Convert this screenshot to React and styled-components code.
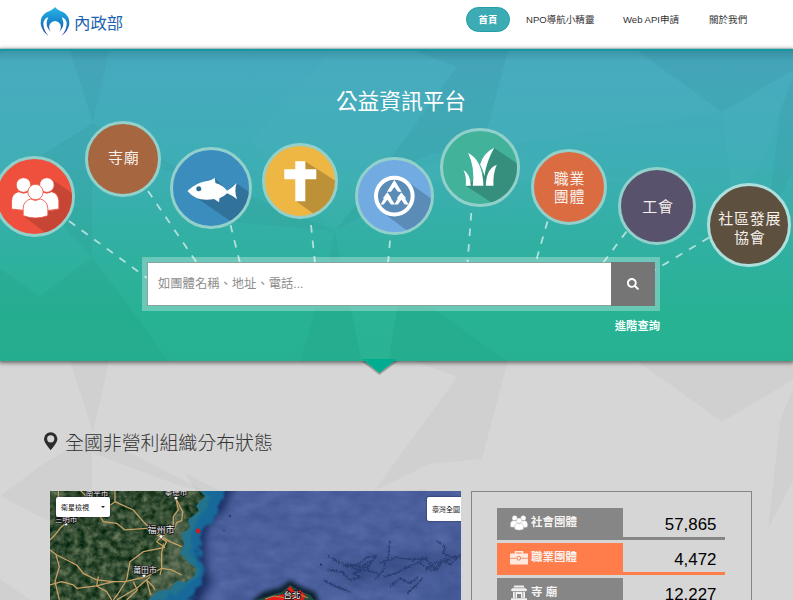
import React from "react";
import styled, { createGlobalStyle } from "styled-components";
import { FaSearch } from "react-icons/fa";

const GlobalStyle = createGlobalStyle`
  * { box-sizing: border-box; }
  body { margin: 0; background: #d6d6d6; }
`;

const Page = styled.div`
  width: 793px;
  height: 600px;
  overflow: hidden;
  display: flex;
  flex-direction: column;
  font-family: "Liberation Sans", "Noto Sans CJK TC", sans-serif;
  color: #222;
`;

const Header = styled.header`
  flex: none;
  height: 49px;
  display: flex;
  justify-content: space-between;
  align-items: flex-start;
  padding: 7px 46px 0 40px;
  background: #fff;
  border-bottom: 1px solid #d9eeee;
`;

const Brand = styled.a`
  display: flex;
  align-items: center;
  gap: 4px;
  height: 31px;
  color: #1c63b0;
  font-size: 16.4px;
  line-height: 30px;
`;

const Nav = styled.nav`
  display: flex;
  align-items: center;
  height: 25px;
`;

const HomeLink = styled.a`
  width: 44px;
  height: 25px;
  margin-right: 16px;
  border-radius: 13px;
  border: 1px solid #219fa6;
  background: #3cabb3;
  color: #fff;
  font-size: 9.4px;
  font-weight: 700;
  line-height: 23px;
  text-align: center;
`;

const NavLink = styled.a`
  width: ${(p) => p.$width}px;
  margin-left: ${(p) => p.$gap || 0}px;
  color: #333;
  font-size: 9.55px;
  line-height: 25px;
  white-space: nowrap;
`;

const Hero = styled.section`
  flex: none;
  position: relative;
  height: 312px;
  padding-top: 36px;
  display: flex;
  flex-direction: column;
  align-items: center;
  border-top: 2px solid #159aa3;
  background: linear-gradient(#3a94a6 0, #45a9bd 10px, #45abbd 30px, #3daeb4 38%, #31b0a2 62%, #27b294 85%, #26b292 100%);
  box-shadow: 0 1px 4px 1px rgba(0, 0, 0, 0.5);
`;

const Backdrop = styled.svg`
  position: absolute;
  top: 0;
  left: 0;
  width: 793px;
  height: 311px;
  pointer-events: none;
`;

const HeroTitle = styled.h1`
  position: relative;
  margin: 0;
  padding-left: 9px;
  height: 30px;
  color: #fff;
  font-size: 21.7px;
  font-weight: 400;
  line-height: 30px;
`;

const NodeCanvas = styled.div`
  position: absolute;
  inset: -2px 0 0 0;
`;

const Links = styled.svg`
  position: absolute;
  top: 0;
  left: 0;
  width: 793px;
  height: 312px;
`;

const Node = styled.a`
  position: absolute;
  left: ${(p) => p.$x - p.$r}px;
  top: ${(p) => p.$y - 49 - p.$r}px;
  width: ${(p) => p.$r * 2}px;
  height: ${(p) => p.$r * 2}px;
  display: flex;
  align-items: center;
  justify-content: center;
  overflow: hidden;
  border-radius: 50%;
  border: 3px solid ${(p) => p.$ring || "#92d0cb"};
  background: ${(p) => p.$color};
`;

const NodeIcon = styled.svg`
  display: block;
  flex: none;
  width: 100%;
  height: 100%;
`;

const NodeLabel = styled.span`
  padding: ${(p) => p.$drop || 0}px 0 0 2px;
  color: #f7f1ec;
  font-size: 15px;
  letter-spacing: 0.8px;
  line-height: 18.6px;
  text-align: center;
  white-space: pre;
`;

const SearchArea = styled.div`
  position: relative;
  width: 518px;
  margin: 140px 0 0 9px;
  display: flex;
  flex-direction: column;
  align-items: flex-end;
`;

const SearchBox = styled.form`
  width: 518px;
  height: 54px;
  display: flex;
  border: 5px solid rgba(255, 255, 255, 0.3);
  background-clip: padding-box;
`;

const SearchInput = styled.input`
  flex: 1;
  min-width: 0;
  height: 44px;
  padding: 0 10px;
  border: 1px solid #8aa49f;
  border-right: 0;
  border-radius: 0;
  background: #fff;
  font-family: inherit;
  font-size: 12.3px;
  outline: none;
  &::placeholder { color: #8d8d8d; opacity: 1; }
`;

const SearchButton = styled.button`
  width: 44px;
  height: 44px;
  padding: 0;
  border: 0;
  display: flex;
  align-items: center;
  justify-content: center;
  background: #757575;
  color: #fff;
  font-size: 12px;
`;

const AdvancedLink = styled.a`
  margin-top: 6px;
  color: #f4fffb;
  font-size: 11.3px;
  font-weight: 700;
  line-height: 18px;
`;

const Arrow = styled.svg`
  position: absolute;
  left: 357px;
  top: 307px;
  width: 45px;
  height: 22px;
`;

const Main = styled.main`
  flex: 1;
  position: relative;
  padding: 66px 41px 0 43px;
  background: #d6d6d6;
  z-index: 0;
`;

const MainBackdrop = styled(Backdrop)`
  z-index: -1;
`;

const HeroLayer = styled.div`
  position: relative;
  z-index: 1;
`;

const SectionTitle = styled.h2`
  margin: 0 0 46px;
  height: 18px;
  padding-top: 5px;
  display: flex;
  align-items: flex-start;
  gap: 7px;
  color: #333;
  font-size: 18.9px;
  font-weight: 300;
  line-height: 23px;
  white-space: nowrap;
`;

const PinIcon = styled.svg`
  flex: none;
  width: 15px;
  height: 20px;
`;

const Columns = styled.div`
  display: flex;
  gap: 10px;
  padding-left: 7px;
`;

const MapPanel = styled.div`
  position: relative;
  width: 411px;
  height: 109px;
  overflow: hidden;
`;

const MapDrawing = styled.svg`
  display: block;
  width: 411px;
  height: 109px;
  & filter { color-interpolation-filters: sRGB; }
`;

const MapControl = styled.button`
  position: absolute;
  top: 6px;
  left: ${(p) => p.$left}px;
  width: ${(p) => p.$width}px;
  height: ${(p) => p.$height}px;
  padding: 0 5px;
  display: flex;
  align-items: center;
  justify-content: space-between;
  border: 0;
  border-radius: 2px;
  background: #fff;
  box-shadow: 0 0 2px rgba(0, 0, 40, 0.7);
  color: #111;
  font-family: inherit;
  font-size: 7px;
  white-space: nowrap;
`;

const Caret = styled.i`
  border: 2px solid transparent;
  border-top-color: #222;
  border-bottom: 0;
`;

const StatsPanel = styled.aside`
  width: 281px;
  height: 140px;
  padding: 16px 25px 0;
  display: flex;
  flex-direction: column;
  gap: 3px;
  border: 1px solid #858585;
`;

const StatRow = styled.div`
  --tone: ${(p) => (p.$active ? "#ff7d4a" : "#868686")};
  width: 228px;
  height: 32px;
  flex: none;
  display: flex;
`;

const StatLabel = styled.div`
  width: 126px;
  padding: 0 0 5px 13px;
  display: flex;
  align-items: center;
  gap: 3px;
  background: var(--tone);
  color: #f6f3f2;
  font-size: 11.5px;
  font-weight: 700;
  line-height: 16px;
`;

const StatIcon = styled.svg`
  width: 18px;
  height: 16px;
  margin-top: 2px;
  overflow: visible;
`;

const StatValue = styled.div`
  flex: 1;
  padding-right: 8.5px;
  border-bottom: 3px solid var(--tone);
  color: #000;
  font-size: 16.9px;
  line-height: 33px;
  text-align: right;
`;

const facets = [
  ["d", "70,0 109,0 93,72"],
  ["d", "93,72 40,105 0,135 50,161 92,206 92,100"],
  ["d", "93,72 101,77 207,131 180,125 92,92"],
  ["l", "0,0 70,0 93,72 0,132"],
  ["d", "92,206 98,312 170,312 125,250"],
  ["d", "0,218 40,245 0,261"],
  ["d", "0,261 40,245 92,206 98,312 0,312"],
  ["d", "415,0 457,16 374,130 430,103 482,98 508,0"],
  ["l", "457,16 374,130 335,180 250,90 330,0 415,0"],
  ["d", "335,180 430,128 374,130"],
  ["d", "335,180 250,145 185,112 220,170"],
  ["d", "335,180 328,213 300,312 362,312 347,240"],
  ["l", "347,240 400,240 388,312 362,312"],
  ["d", "400,240 388,312 510,312 425,252"],
  ["d", "637,0 722,61 727,0"],
  ["d", "727,0 722,61 793,19 793,0"],
  ["l", "482,98 600,80 722,61 640,0 508,0"],
  ["l", "722,61 793,19 768,100 733,155"],
  ["d", "793,27 780,60 768,168 793,120"],
  ["l", "482,98 374,130 632,130"],
];

function Facets({ strength = 1 }) {
  return facets.map(([tone, points]) => (
    <polygon
      key={points}
      points={points}
      fill={tone === "d" ? "#000" : "#fff"}
      opacity={(tone === "d" ? 0.024 : 0.013) * strength}
    />
  ));
}

function PeopleShapes({ outline }) {
  return (
    <g fill="#fff" stroke={outline} strokeWidth="2.5">
      <circle cx="69" cy="225" r="22" />
      <circle cx="139" cy="225" r="22" />
      <path d="M33 297V272Q34 250 55 245Q69 254 84 245Q103 250 104 272V297Q70 305 33 297Z" />
      <path d="M105 297V272Q106 250 124 245Q139 254 153 245Q173 250 175 272V297Q140 306 105 297Z" />
      <circle cx="105" cy="246" r="23" />
      <path d="M68 317V294Q69 273 90 267Q105 276 120 267Q140 273 142 294V317Q105 331 68 317Z" />
    </g>
  );
}

const links = [
  [69, 221, 147, 278],
  [148, 191, 197, 263],
  [230.5, 225, 240, 263],
  [311, 225, 315, 263],
  [390, 240.5, 388, 263],
  [471.3, 213, 467.5, 263],
  [547.5, 221.5, 535.5, 263],
  [626.5, 231.5, 603, 263],
  [709, 237.5, 655, 270],
];

/* Icons are drawn on a grid three units per pixel. */
const nodes = [
  {
    x: 34, y: 196.5, r: 40.5, color: "#ee503d", origin: [0, 110],
    icon: (
      <>
        <path d="M154 208L290 300L230 440L68 318L140 300Z" fill="#c64535" />
        <PeopleShapes outline="#ee503d" />
      </>
    ),
  },
  { x: 122.8, y: 158.7, r: 38, color: "#a6663f", label: "寺廟" },
  {
    x: 211.2, y: 188, r: 41.3, color: "#3b8dbd", origin: [0, 110],
    icon: (
      <>
        <path d="M644 203L681 241L709 219L800 280L740 370L690 331L580 256Z" fill="#31729a" />
        <path d="M562 242Q587 218 617 213Q635 210 644 202L646 218Q668 224 681 241Q696 233 710 218Q701 241 711 267Q694 254 681 249Q672 259 658 264L657 276L642 266Q590 276 562 242Z" fill="#fff" />
        <circle cx="596" cy="235" r="7.5" fill="#2a6f96" />
      </>
    ),
  },
  {
    x: 299.7, y: 180.8, r: 38, color: "#eeb743", origin: [250, 110],
    icon: (
      <>
        <path d="M165 154L300 240L230 340L136 272L165 207Z" fill="#bd9137" />
        <path d="M135 153H165V177H198V207H165V273H135V207H102V177H135Z" fill="#fff" />
      </>
    ),
  },
  {
    x: 394.3, y: 196.2, r: 39.3, color: "#72abe2", origin: [250, 110],
    icon: (
      <>
        <path d="M477 218L580 292L510 390L391 302Z" fill="#5b8cb7" />
        <circle cx="433" cy="258" r="55" fill="#5b8cb7" stroke="#fff" strokeWidth="12" />
        <path d="M433 210L455 245H444L433 231L423 245H411ZM412 247L435 283H423L412 269L401 283H392ZM454 247L476 283H464L454 269L444 283H433Z" fill="#fff" />
        <path d="M427 226L433 216L440 226L433 220ZM401 265L412 251L422 265L412 257ZM443 265L454 251L466 265L454 257Z" fill="#fff" stroke="#fff" strokeWidth="5" />
      </>
    ),
  },
  {
    x: 480, y: 167.7, r: 39.8, color: "#42b29b", origin: [250, 110],
    icon: (
      <>
        <path d="M733 114L830 178L760 300L648 227L700 190Z" fill="#368f7d" />
        <path d="M655 129Q698 150 701 227H669Q676 172 655 129ZM733 113Q700 130 691 163Q699 177 704 198Q710 153 733 113ZM641 180Q661 191 663 227H648Q651 200 641 180ZM741 164Q709 176 708 227H731Q729 191 741 164Z" fill="#fff" />
      </>
    ),
  },
  { x: 568.5, y: 186.8, r: 38, color: "#db6b41", label: "職業\n團體", drop: 3 },
  { x: 657, y: 206, r: 39.2, color: "#59526c", label: "工會", drop: 2 },
  { x: 748.8, y: 224.8, r: 42, color: "#5e503e", label: "社區發展\n協會", drop: 8, ring: "#addfdd" },
];

function CategoryNode({ node }) {
  const inner = node.r - 3;
  let content = <NodeLabel $drop={node.drop}>{node.label}</NodeLabel>;
  if (node.icon) {
    const left = (node.x - inner - node.origin[0]) * 3;
    const top = (node.y - inner - node.origin[1]) * 3;
    content = (
      <NodeIcon viewBox={`${left} ${top} ${inner * 6} ${inner * 6}`}>{node.icon}</NodeIcon>
    );
  }
  return (
    <Node $x={node.x} $y={node.y} $r={node.r} $color={node.color} $ring={node.ring}>
      {content}
    </Node>
  );
}

function Logo() {
  return (
    <svg width="30" height="31" viewBox="0 0 90 93">
      <defs>
        <linearGradient id="logoTone" x1="0" y1="0" x2="0" y2="1">
          <stop offset="0" stopColor="#28b7e5" />
          <stop offset="0.5" stopColor="#1785cc" />
          <stop offset="1" stopColor="#27439b" />
        </linearGradient>
      </defs>
      <path
        fill="url(#logoTone)"
        d="M45 0Q52 9 69 15Q89 26 88 50Q85 72 64 87Q81 68 80 48Q78 35 65 31Q75 50 66 64Q62 71 58 74Q66 60 60 50Q54 42 45 42Q36 42 30 50Q24 60 32 74Q28 71 24 64Q15 50 25 31Q12 35 10 48Q9 68 26 87Q5 72 2 50Q1 26 21 15Q38 9 45 0Z"
      />
    </svg>
  );
}

const roads = [
  "345,270 345,305 400,330 430,365 450,385 480,405",
  "240,270 275,305 310,365 350,370 375,390 440,385 480,410",
  "345,305 318,325 325,345",
  "528,296 535,330 520,350 520,375 500,400 485,410",
  "530,300 548,335 545,362 530,368 522,390",
  "485,410 510,425 545,440",
  "485,410 470,425 492,440 500,425 480,412",
  "490,430 485,460 485,505 440,530 375,545 340,545 290,540 250,520 230,495 200,480 170,465 150,450",
  "495,442 430,455 390,485 380,540 355,580 340,600",
  "168,465 178,500 165,545 178,600",
  "150,555 185,545 220,555 230,565 290,558 340,545",
  "175,270 175,300",
  "215,360 195,372 180,385 165,405 150,420",
  "485,505 515,510 545,525",
  "440,540 460,560 465,570",
  "440,540 452,585",
  "400,545 412,570 380,600",
  "290,558 320,575 335,600",
  "290,558 295,530",
  "485,505 480,525",
  "450,530 410,565 350,600",
];

const places = [
  [47, 4.5, "南平市", 7.5],
  [126, 4, "寧德市", 7.5],
  [16, 31, "三明市", 7.5],
  [111, 41.5, "福州市", 9],
  [95, 82, "莆田市", 7.8],
  [242, 107, "台北", 8.5],
];

const towns = [[111, 45.5], [94, 84.5], [126, 7], [16, 33]];

const ridges = [
  "230,255 290,290 330,280 350,262 378,258 360,285 325,300 285,283",
  "235,300 275,305 300,330 330,322 310,310 345,300 385,310",
  "375,330 400,300 415,255 420,213",
  "390,280 440,262 490,270 520,262 540,280",
  "400,320 440,310 475,290 500,280 530,262",
  "525,300 545,285 560,300 580,270 600,285 633,250",
  "535,290 570,275 600,268 633,256",
  "560,212 585,230 580,250 600,260 633,262",
  "420,350 450,325 480,340 505,320",
  "470,370 500,345 520,320",
  "220,330 260,350 300,365",
  "510,280 545,300 570,290",
  "290,280 330,292 370,270 350,300",
];

function SatelliteMap() {
  return (
    <MapDrawing viewBox="0 0 411 109">
      <defs>
        <filter id="terrain" x="0" y="0" width="100%" height="100%">
          <feTurbulence type="fractalNoise" baseFrequency="0.14" numOctaves="4" seed="8" />
          <feColorMatrix values="0.6 0 0 0 -0.1  0.5 0 0 0 0.05  0.45 0 0 0 -0.03  0 0 0 0 1" />
        </filter>
        <filter id="seabed" x="0" y="0" width="100%" height="100%">
          <feTurbulence type="fractalNoise" baseFrequency="0.05 0.09" numOctaves="3" seed="3" />
          <feColorMatrix values="0.1 0 0 0 0.245  0.1 0 0 0 0.325  0.1 0 0 0 0.565  0 0 0 0 1" />
        </filter>
        <filter id="coast" x="-20%" y="-20%" width="140%" height="140%">
          <feTurbulence type="fractalNoise" baseFrequency="0.12" numOctaves="3" seed="5" result="n" />
          <feDisplacementMap in="SourceGraphic" in2="n" scale="13" xChannelSelector="R" yChannelSelector="G" />
          <feGaussianBlur stdDeviation="1.2" />
        </filter>
        <filter id="soft" x="-30%" y="-30%" width="160%" height="160%">
          <feGaussianBlur stdDeviation="4" />
        </filter>
        <filter id="halo" x="-30%" y="-60%" width="160%" height="220%">
          <feGaussianBlur stdDeviation="2.2" />
        </filter>
        <filter id="ridge" x="-10%" y="-20%" width="120%" height="140%">
          <feTurbulence type="fractalNoise" baseFrequency="0.25" numOctaves="3" seed="2" result="n" />
          <feDisplacementMap in="SourceGraphic" in2="n" scale="14" xChannelSelector="R" yChannelSelector="G" />
          <feGaussianBlur stdDeviation="0.5" />
        </filter>
        <clipPath id="land">
          <path d="M0 0H150L155 5L146 15L149 20L138 29L140 37L131 43L134 53L130 62L139 72L146 77L144 85L136 91L126 90L120 98L108 100L98 109H0Z" />
        </clipPath>
      </defs>
      <rect width="411" height="109" fill="#4a609e" />
      <rect width="411" height="109" filter="url(#seabed)" />
      <path d="M0 -10H186L174 20L160 32L155 48L156 78L162 90L145 119H0Z" fill="#1b2e63" filter="url(#soft)" />
      <path d="M0 -10H179L168 22L153 40L149 63L155 85L135 119H0Z" fill="#17699a" filter="url(#coast)" />
      <path d="M153 0L164 5L147 31L139 55L147 70L151 83L135 97L113 109H90L80 70L110 10Z" fill="#2b7a85" opacity="0.6" filter="url(#coast)" />
      <g clipPath="url(#land)">
        <rect width="160" height="109" filter="url(#terrain)" />
        <path d="M125 20L140 33L134 60L147 80L128 99L105 109L100 95L120 69L118 47Z" fill="#869078" opacity="0.35" filter="url(#coast)" />
      </g>
      <g transform="translate(-50 -91) scale(.3333)" fill="none" stroke="#c9a267" strokeWidth="3.8" strokeLinejoin="round">
        {roads.map((points) => <polyline key={points} points={points} />)}
      </g>
      <path d="M270 80L310 65L350 62L395 60L411 55V72L370 82L350 90L300 92Z" fill="#2c4076" opacity="0.4" filter="url(#soft)" />
      <g transform="translate(200 -21) scale(.3333)" fill="none" stroke="#263768" strokeWidth="5" opacity="0.75" filter="url(#ridge)">
        {ridges.map((points) => <polyline key={points} points={points} />)}
      </g>
      <path d="M395 96L411 87V109H360Z" fill="#2b427f" opacity="0.35" filter="url(#soft)" />
      <path d="M200 111L213 101L231 96L240 89L252 96L265 101L270 112Z" fill="#0d2130" filter="url(#halo)" />
      <path d="M207 109L222 104L232 101L240 94L248 99L260 104L264 109Z" fill="#224d3d" />
      <path d="M214 109L225 105L234 103L240 95L246 102L250 99L256 105L253 109Z" fill="#e51b1a" />
      <path d="M215 108L224 105L236 107L248 103L258 107" fill="none" stroke="#b38c50" />
      <circle cx="148" cy="40" r="2.4" fill="#c81d21" />
      <circle cx="180" cy="25" r="1.2" fill="#233f78" />
      <circle cx="174" cy="39.5" r="0.8" fill="#233f78" />
      <circle cx="271" cy="73.5" r="1" fill="#182d62" />
      {towns.map(([x, y]) => (
        <circle key={x} cx={x} cy={y} r="1.8" fill="#fff" stroke="#444" strokeWidth="0.5" />
      ))}
      {places.map(([x, y, name, size]) => (
        <text
          key={name}
          x={x}
          y={y}
          fontSize={size}
          textAnchor="middle"
          fill="#f0f0f0"
          stroke="#151515"
          strokeWidth="1.6"
          paintOrder="stroke"
        >
          {name}
        </text>
      ))}
    </MapDrawing>
  );
}

const statIcons = {
  people: (
    <StatIcon viewBox="30 200 148 130">
      <PeopleShapes outline="#868686" />
    </StatIcon>
  ),
  briefcase: (
    <StatIcon viewBox="0 0 18 16">
      <path d="M5.5 4V1.7H12.5V4" fill="none" stroke="#ffe9df" strokeWidth="1.6" />
      <path d="M0 3.5H18V14.5H0Z" fill="#ffe9df" />
      <path d="M0 8.3H6.5M11 8.3H18" stroke="#f58a5f" strokeWidth="0.9" />
      <circle cx="8.8" cy="8.2" r="1.9" fill="#ffe9df" stroke="#e9845d" strokeWidth="1" />
    </StatIcon>
  ),
  temple: (
    <StatIcon viewBox="0 0 18 16">
      <path d="M4 0.5H14V2.3L17.3 4.8L16 6.3H2L.7 4.8L4 2.3ZM3 7H15V13H11V9H7V13H3ZM1 13.3H17V15.6H1Z" fill="#f0f0f0" />
      <path d="M3.3 2.8H14.7M5.2 7V13M12.8 7V13" stroke="#868686" strokeWidth="0.7" />
    </StatIcon>
  ),
};

const stats = [
  { icon: "people", label: "社會團體", value: "57,865" },
  { icon: "briefcase", label: "職業團體", value: "4,472", active: true },
  { icon: "temple", label: "寺 廟", value: "12,227" },
];

export default function App() {
  return (
    <Page>
      <GlobalStyle />
      <Header>
        <Brand>
          <Logo />
          內政部
        </Brand>
        <Nav>
          <HomeLink>首頁</HomeLink>
          <NavLink $width={68}>NPO導航小精靈</NavLink>
          <NavLink $width={57} $gap={29}>Web API申請</NavLink>
          <NavLink $width={38} $gap={29}>關於我們</NavLink>
        </Nav>
      </Header>
      <HeroLayer>
        <Hero>
          <Backdrop viewBox="0 0 793 311"><Facets strength={1.2} /></Backdrop>
          <HeroTitle>公益資訊平台</HeroTitle>
          <NodeCanvas>
            <Links viewBox="0 49 793 312">
              {links.map(([x1, y1, x2, y2]) => (
                <line
                  key={x1}
                  x1={x1}
                  y1={y1}
                  x2={x2}
                  y2={y2}
                  stroke="#fff"
                  strokeOpacity="0.62"
                  strokeWidth="1.8"
                  strokeDasharray="7.6 8"
                />
              ))}
            </Links>
            {nodes.map((node) => <CategoryNode key={node.x} node={node} />)}
          </NodeCanvas>
          <SearchArea>
            <SearchBox>
              <SearchInput placeholder="如團體名稱、地址、電話..." />
              <SearchButton type="button"><FaSearch /></SearchButton>
            </SearchBox>
            <AdvancedLink>進階查詢</AdvancedLink>
          </SearchArea>
          <Arrow viewBox="0 0 45 22">
            <path d="M4 3H41L22.5 17Z" fill="#333" opacity="0.35" />
            <path d="M5 1H40L22.5 15Z" fill="#00ad90" />
          </Arrow>
        </Hero>
      </HeroLayer>
      <Main>
        <MainBackdrop viewBox="0 0 793 311"><Facets /></MainBackdrop>
        <SectionTitle>
          <PinIcon viewBox="0 0 15 20">
            <path
              fillRule="evenodd"
              fill="#2c2c2c"
              d="M7.7 0.2A6.8 6.8 0 0 1 14.4 7C14.4 10.5 10 15 7.7 18.3C5.4 15 1 10.5 1 7A6.8 6.8 0 0 1 7.7 0.2ZM7.7 3.2A3.6 3.6 0 1 0 7.7 10.4A3.6 3.6 0 1 0 7.7 3.2Z"
            />
          </PinIcon>
          全國非營利組織分布狀態
        </SectionTitle>
        <Columns>
          <MapPanel>
            <SatelliteMap />
            <MapControl $left={6} $width={54} $height={20}>衛星檢視<Caret /></MapControl>
            <MapControl $left={377} $width={60} $height={24}>臺灣全圖</MapControl>
          </MapPanel>
          <StatsPanel>
            {stats.map((row) => (
              <StatRow key={row.label} $active={row.active}>
                <StatLabel>{statIcons[row.icon]}{row.label}</StatLabel>
                <StatValue>{row.value}</StatValue>
              </StatRow>
            ))}
          </StatsPanel>
        </Columns>
      </Main>
    </Page>
  );
}
